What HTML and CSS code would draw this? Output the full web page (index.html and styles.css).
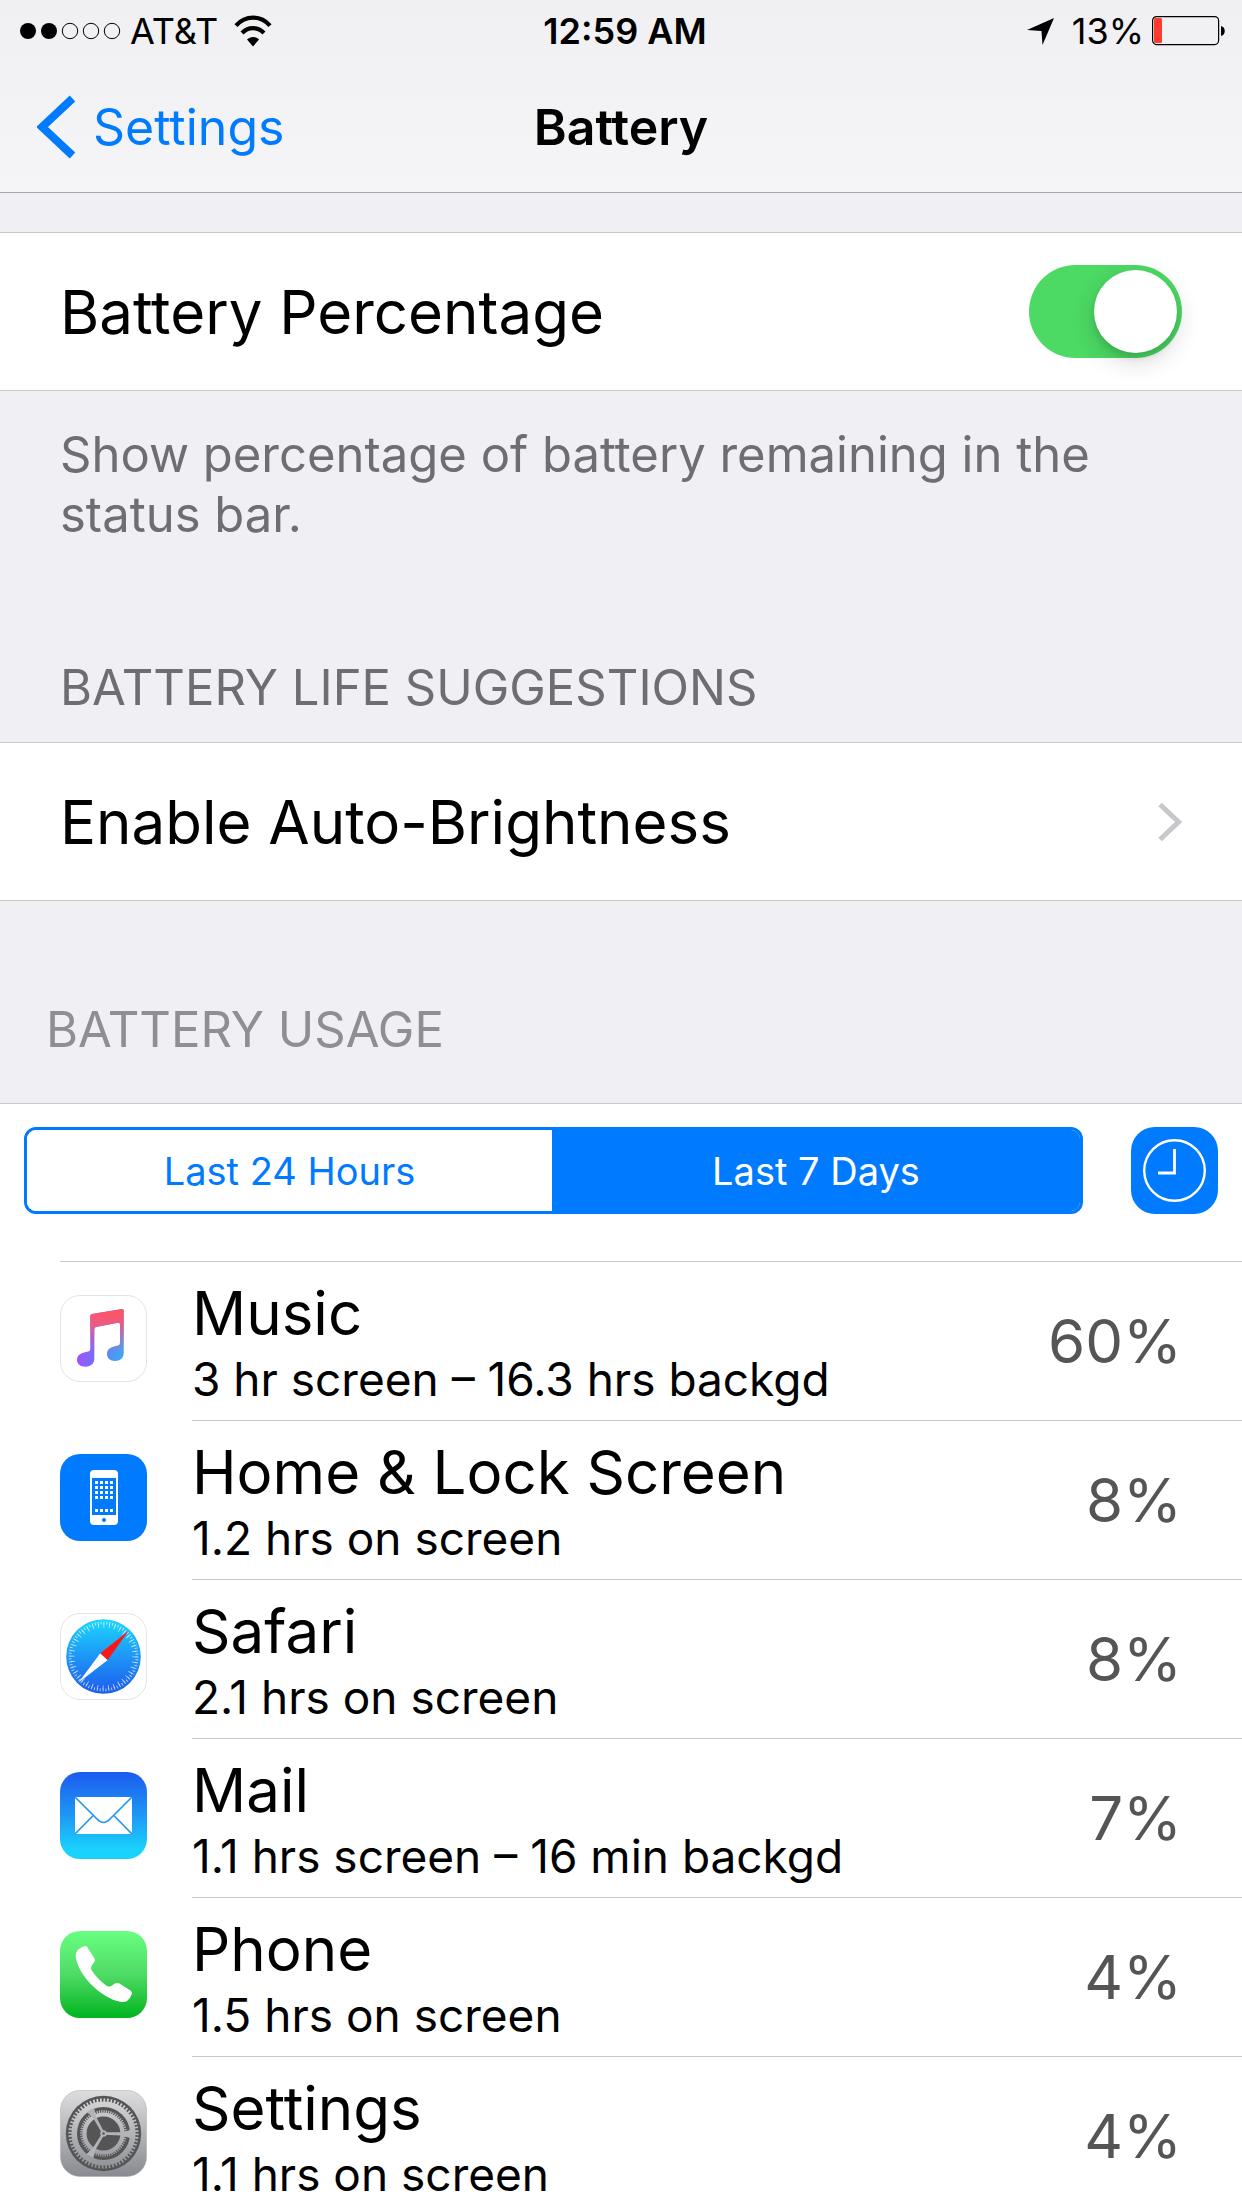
FILE: index.html
```html
<!DOCTYPE html>
<html lang="en">
<head>
<meta charset="utf-8">
<meta name="viewport" content="width=device-width, initial-scale=1">
<title>Battery</title>
<link rel="stylesheet" href="styles.css">
</head>
<body>
<div class="screen">
  <header class="topbar">
    <div class="status">
      <div class="status-left">
        <svg class="signal" width="102" height="18" viewBox="0 0 102 18" aria-hidden="true">
          <circle cx="8" cy="9" r="8"/><circle cx="29" cy="9" r="8"/>
          <g fill="none" stroke="#000" stroke-width="1"><circle cx="50" cy="9" r="7.7"/><circle cx="71" cy="9" r="7.7"/><circle cx="92" cy="9" r="7.7"/></g>
        </svg>
        <span class="carrier">AT&amp;T</span>
        <svg width="38" height="33" viewBox="0 0 38 33" aria-hidden="true">
          <g fill="none" stroke="#000" stroke-width="4.2"><path d="M2 10.600C11.500 0 26.500 0 36 10.600"/><path d="M8 18C14.500 11.500 23.500 11.500 30 18"/></g>
          <path d="M13 24.500C16.500 21 21.500 21 25 24.500L19 31.500Z"/>
        </svg>
      </div>
      <span class="time">12:59 AM</span>
      <div class="status-right">
        <svg width="27" height="27" viewBox="0 0 27 27" aria-hidden="true"><path d="M27 0L15.500 27L14.500 13L0 12Z"/></svg>
        <span class="level">13%</span>
        <svg width="74" height="30" viewBox="0 0 74 30" aria-hidden="true">
          <rect x=".6" y=".6" width="66" height="28" rx="4" fill="none" stroke="#000" stroke-width="1.200"/>
          <rect x="2" y="2" width="8" height="25" rx="1.500" fill="#ff3b30"/>
          <path d="M69 10C74 11 74 19 69 20Z"/>
        </svg>
      </div>
    </div>
    <nav class="navbar">
      <a class="back" href="#settings">
        <svg width="39" height="64" viewBox="0 0 39 64" aria-hidden="true"><path d="M35.500 3.500L5 32L35.500 60.500" fill="none" stroke="#007aff" stroke-width="8"/></svg>
        <span>Settings</span>
      </a>
      <h1 class="title">Battery</h1>
    </nav>
  </header>

  <main class="content">
    <section class="group">
      <div class="cell">
        <label for="percentage">Battery Percentage</label>
        <input class="switch" type="checkbox" role="switch" id="percentage" checked>
      </div>
      <p class="note">Show percentage of battery remaining in the status bar.</p>
    </section>

    <section class="group suggestions">
      <h2 class="heading">BATTERY LIFE SUGGESTIONS</h2>
      <a class="cell" href="#brightness">
        <span>Enable Auto-Brightness</span>
        <svg width="24" height="40" viewBox="0 0 24 40" aria-hidden="true"><path d="M2 2.500L20.500 20L2 37.500" fill="none" stroke="#c7c7cc" stroke-width="5"/></svg>
      </a>
    </section>

    <section class="group usage">
      <h2 class="heading heading-light">BATTERY USAGE</h2>
      <div class="panel">
        <div class="controls">
          <div class="segments">
            <button class="segment" type="button" aria-pressed="false">Last 24 Hours</button>
            <button class="segment selected" type="button" aria-pressed="true">Last 7 Days</button>
          </div>
          <button class="clock" type="button" aria-label="Show time">
            <svg width="87" height="87" viewBox="0 0 87 87"><g fill="none" stroke="#fff"><circle cx="43.500" cy="43.500" r="30.300" stroke-width="2.400"/><path d="M43.500 22V46H27" stroke-width="2.800"/></g></svg>
          </button>
        </div>
        <ul class="apps">
          <li class="app">
            <svg class="icon" viewBox="0 0 87 87" aria-hidden="true">
              <defs>
                <linearGradient id="note-base" gradientUnits="userSpaceOnUse" x1="20" y1="0" x2="62" y2="0"><stop offset="0" stop-color="#9b56ff"/><stop offset=".35" stop-color="#7070fb"/><stop offset="1" stop-color="#3aaaf5"/></linearGradient>
                <linearGradient id="note-top" gradientUnits="userSpaceOnUse" x1="0" y1="18" x2="0" y2="60"><stop offset="0" stop-color="#ff5368"/><stop offset=".3" stop-color="#e85c88"/><stop offset="1" stop-color="#c060c0" stop-opacity="0"/></linearGradient>
                <path id="note" d="M32 19L62 14Q63.700 13.700 63.700 15.500V58C63.700 63 60 66 55 66C50 66 47 63 47 59C47 54 51 52 56 51C59 50.400 60 50 60 47V29.500Q60 27.400 58 27.800L36 32Q34.300 32.400 34.300 34.500V64C34.300 69 30 71.700 25.500 71.700C20.500 71.700 17 69 17 65C17 60 21 58 26 57C29.500 56.400 30.300 56 30.300 53V21Q30.300 19.300 32 19Z"/>
              </defs>
              <rect x=".5" y=".5" width="86" height="86" rx="19.500" fill="#fff" stroke="#e3e3e3"/>
              <use href="#note" fill="url(#note-base)"/><use href="#note" fill="url(#note-top)"/>
            </svg>
            <div class="details">
              <div><h3 class="name">Music</h3><p class="time-used">3 hr screen – 16.3 hrs backgd</p></div>
              <span class="share">60%</span>
            </div>
          </li>
          <li class="app">
            <svg class="icon" viewBox="0 0 87 87" aria-hidden="true">
              <rect width="87" height="87" rx="20" fill="#007aff"/>
              <rect x="30" y="16" width="28" height="55" rx="4" fill="#fff"/>
              <rect x="32" y="24" width="24" height="37" fill="#007aff"/>
              <path d="M35 28.500H53M35 33.500H53M35 38.500H53M35 43.500H53M35 56.500H53" stroke="#fff" stroke-width="3" stroke-dasharray="3 2"/>
              <circle cx="44" cy="66" r="2" fill="#007aff"/>
            </svg>
            <div class="details">
              <div><h3 class="name">Home &amp; Lock Screen</h3><p class="time-used">1.2 hrs on screen</p></div>
              <span class="share">8%</span>
            </div>
          </li>
          <li class="app">
            <svg class="icon" viewBox="0 0 87 87" aria-hidden="true">
              <defs><linearGradient id="compass" x1="0" y1="0" x2="0" y2="1"><stop offset="0" stop-color="#1ad7fd"/><stop offset=".5" stop-color="#1e96f6"/><stop offset="1" stop-color="#1d5bee"/></linearGradient></defs>
              <rect x=".5" y=".5" width="86" height="86" rx="19.500" fill="#fff" stroke="#e3e3e3"/>
              <circle cx="43.500" cy="43.500" r="37.300" fill="url(#compass)"/>
              <g fill="none" stroke="#fff" stroke-opacity=".75"><circle cx="43.500" cy="43.500" r="33.500" stroke-width="3" pathLength="144" stroke-dasharray=".6 1.400"/><circle cx="43.500" cy="43.500" r="31" stroke-width="4" pathLength="144" stroke-dasharray=".6 3.400"/></g>
              <path d="M18.300 69.700L40.300 40.300L47.700 47Z" fill="#fff"/>
              <path d="M68.700 17.700L40.300 40.300L47.700 47Z" fill="#ff1512"/>
            </svg>
            <div class="details">
              <div><h3 class="name">Safari</h3><p class="time-used">2.1 hrs on screen</p></div>
              <span class="share">8%</span>
            </div>
          </li>
          <li class="app">
            <svg class="icon" viewBox="0 0 87 87" aria-hidden="true">
              <defs><linearGradient id="sky" x1="0" y1="0" x2="0" y2="1"><stop offset="0" stop-color="#1d5bee"/><stop offset=".5" stop-color="#1e98f6"/><stop offset=".9" stop-color="#1ad3fd"/></linearGradient></defs>
              <rect width="87" height="87" rx="20" fill="url(#sky)"/>
              <path d="M15 25H72V62H15Z" fill="#fff"/>
              <path d="M15 25L37 47Q43.500 54 50 47L72 25M15 62L32.700 44M72 62L54.300 44" fill="none" stroke="#2196f3" stroke-width="1.700"/>
            </svg>
            <div class="details">
              <div><h3 class="name">Mail</h3><p class="time-used">1.1 hrs screen – 16 min backgd</p></div>
              <span class="share">7%</span>
            </div>
          </li>
          <li class="app">
            <svg class="icon" viewBox="0 0 87 87" aria-hidden="true">
              <defs><linearGradient id="leaf" x1="0" y1="0" x2="0" y2="1"><stop offset="0" stop-color="#67ff81"/><stop offset=".5" stop-color="#4fdb66"/><stop offset="1" stop-color="#01b41f"/></linearGradient></defs>
              <rect width="87" height="87" rx="20" fill="url(#leaf)"/>
              <path d="M24 15.300Q26 14.300 27.200 16L34.500 27.500Q35.500 29.200 34.300 31L31.500 35Q30.300 37 31.500 39Q38 49 47 55Q49 56.200 51 55L55.500 52.200Q57.300 51.300 59 52.200L70.500 59.500Q72.500 61 71.800 63Q70.500 67.500 67 70Q64.500 71.500 60 70.800C40 66.500 18 44 15.700 25.500Q15.600 21 18.300 18.500Q21 16.300 24 15.300Z" fill="#fff"/>
            </svg>
            <div class="details">
              <div><h3 class="name">Phone</h3><p class="time-used">1.5 hrs on screen</p></div>
              <span class="share">4%</span>
            </div>
          </li>
          <li class="app">
            <svg class="icon" viewBox="0 0 87 87" aria-hidden="true">
              <defs><linearGradient id="metal" gradientUnits="userSpaceOnUse" x1="0" y1="0" x2="0" y2="87"><stop offset="0" stop-color="#dedee0"/><stop offset="1" stop-color="#888a90"/></linearGradient></defs>
              <rect x=".5" y=".5" width="86" height="86" rx="19.500" fill="url(#metal)" stroke="#aaa" stroke-opacity=".5"/>
              <circle cx="43.500" cy="43.500" r="37.700" fill="#555"/>
              <g fill="none" stroke="url(#metal)">
                <circle cx="43.500" cy="43.500" r="29.300" stroke-width="5.600"/>
                <circle cx="43.500" cy="43.500" r="33.300" stroke-width="3.600" pathLength="120" stroke-dasharray="1 1"/>
                <circle cx="43.500" cy="43.500" r="19" stroke-width="4.200"/>
                <circle cx="43.500" cy="43.500" r="22" stroke-width="2.600" pathLength="120" stroke-dasharray="1 1"/>
              </g>
              <g fill="#b3b4b8">
                <path id="spoke" d="M43.500 42.300H62L70 40V48L62 45.500L43.500 44.700Z"/>
                <use href="#spoke" transform="rotate(120 43.500 43.500)"/><use href="#spoke" transform="rotate(240 43.500 43.500)"/>
                <circle cx="43.500" cy="43.500" r="3.200"/>
              </g>
              <circle cx="43.500" cy="43.500" r="1.300" fill="#555"/>
            </svg>
            <div class="details">
              <div><h3 class="name">Settings</h3><p class="time-used">1.1 hrs on screen</p></div>
              <span class="share">4%</span>
            </div>
          </li>
        </ul>
      </div>
    </section>
  </main>
</div>
</body>
</html>
```

FILE: styles.css
```css
* {
  box-sizing: border-box;
}

body,
h1,
h2,
h3,
p,
ul {
  margin: 0;
  padding: 0;
}

body {
  background: #efeff4;
  color: #000;
  font-family: Inter, "Liberation Sans", sans-serif;
  font-weight: 400;
}

svg {
  display: block;
  flex: none;
}

a {
  color: inherit;
  text-decoration: none;
}

.screen {
  display: flex;
  flex-direction: column;
  height: 100vh;
  overflow: hidden;
}

.topbar {
  flex: none;
  background: linear-gradient(#f0f0f2, #f5f5f7);
  border-bottom: 1px solid #a7a7aa;
}

.status {
  display: grid;
  grid-template-columns: 1fr auto 1fr;
  align-items: center;
  height: 62px;
  padding: 0 16px 0 20px;
  font-size: 36px;
  line-height: 62px;
}

.status-left,
.status-right {
  display: flex;
  align-items: center;
}

.carrier {
  margin: 0 16px 0 8px;
}

.status-right {
  justify-content: flex-end;
}

.level {
  margin: 0 8px 0 18px;
}

.time {
  padding-left: 4px;
  font-weight: 600;
}

.navbar {
  display: grid;
  grid-template-columns: 1fr auto 1fr;
  align-items: center;
  height: 130px;
  padding: 0 37px;
  font-size: 50px;
  line-height: 60px;
}

.back {
  display: flex;
  align-items: center;
  gap: 17px;
  color: #007aff;
}

.title {
  font-size: 50px;
  font-weight: 600;
}

.content {
  flex: 1;
  min-height: 0;
  padding-top: 39px;
  overflow: hidden;
}

.cell {
  display: flex;
  align-items: center;
  justify-content: space-between;
  height: 159px;
  padding: 0 60px;
  background: #fff;
  border-top: 1px solid #c8c7cc;
  border-bottom: 1px solid #c8c7cc;
  font-size: 60px;
  line-height: 76px;
}

.switch {
  appearance: none;
  display: flex;
  align-items: center;
  justify-content: flex-end;
  width: 153px;
  height: 93px;
  margin: 0;
  padding: 5px;
  border-radius: 47px;
  background: #e5e5ea;
}

.switch:checked {
  background: #4cd964;
}

.switch::before {
  content: "";
  width: 83px;
  height: 83px;
  margin-right: auto;
  border-radius: 50%;
  background: #fff;
  box-shadow: 0 8px 24px rgba(0, 0, 0, 0.16), 0 5px 6px rgba(0, 0, 0, 0.1);
}

.switch:checked::before {
  margin-right: 0;
}

.note {
  padding: 34px 60px 0;
  color: #6d6d72;
  font-size: 49px;
  line-height: 60px;
}

.suggestions {
  padding-top: 113px;
}

.heading {
  padding: 0 60px 24px;
  color: #6d6d72;
  font-size: 49px;
  font-weight: 400;
  line-height: 60px;
}

.usage {
  padding-top: 99px;
}

.heading-light {
  padding: 0 46px 43px;
  color: #8e8e93;
}

.panel {
  background: #fff;
  border-top: 1px solid #c8c7cc;
}

.controls {
  display: flex;
  gap: 48px;
  padding: 23px 24px 47px;
}

.segments {
  display: grid;
  grid-template-columns: 175fr 176fr;
  flex: 1;
  height: 87px;
  overflow: hidden;
  border: 3px solid #007aff;
  border-radius: 12px;
}

.segment {
  padding: 0;
  border: 0;
  background: #fff;
  color: #007aff;
  font-family: inherit;
  font-size: 38px;
  line-height: 48px;
}

.selected {
  background: #007aff;
  color: #fff;
}

.clock {
  flex: none;
  width: 87px;
  height: 87px;
  padding: 0;
  border: 0;
  border-radius: 24px;
  background: #007aff;
}

.apps {
  margin-left: 60px;
  border-top: 1px solid #c8c7cc;
  list-style: none;
}

.app {
  display: flex;
  gap: 45px;
}

.icon {
  width: 87px;
  height: 87px;
  margin-top: 33px;
}

.details {
  display: flex;
  flex: 1;
  align-items: center;
  justify-content: space-between;
  padding: 13px 60px 13px 0;
  border-bottom: 1px solid #c8c7cc;
}

.name {
  font-size: 60px;
  font-weight: 400;
  line-height: 76px;
}

.time-used {
  font-size: 46px;
  line-height: 56px;
}

.share {
  color: #555;
  font-size: 60px;
  line-height: 76px;
}
```
